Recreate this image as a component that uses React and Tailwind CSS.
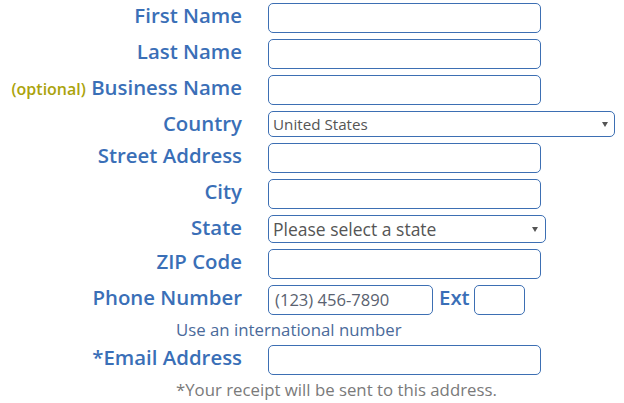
import React from "react";

const Label = ({ children }) => (
  <div className="w-[242px] shrink-0 text-right text-[20.4px] leading-[24px] font-semibold text-[#3a6fb7]">
    {children}
  </div>
);

const TextBox = ({ className = "w-[273px]", placeholder }) => (
  <div
    className={`${className} h-[30px] border border-[#3d6fb3] rounded-[5px] bg-white flex items-center pl-[6px] text-[16.6px] text-[#5a6270]`}
  >
    {placeholder}
  </div>
);

const Arrow = () => (
  <span className="w-0 h-0 border-l-[3px] border-r-[3px] border-t-[5px] border-l-transparent border-r-transparent border-t-[#555]" />
);

const Row = ({ label, children }) => (
  <div className="flex items-start gap-[26px]">
    <Label>{label}</Label>
    {children}
  </div>
);

const App = () => {
  return (
    <div
      className="w-[624px] h-[403px] bg-white pt-[3px] flex flex-col gap-[6px]"
      style={{ fontFamily: "'Open Sans', 'Noto Sans', sans-serif" }}
    >
      <Row label="First Name">
        <TextBox />
      </Row>
      <Row label="Last Name">
        <TextBox />
      </Row>
      <Row
        label={
          <>
            <span className="text-[16px] text-[#aba30c]">(optional)</span> Business Name
          </>
        }
      >
        <TextBox />
      </Row>
      <Row label="Country">
        <div className="w-[347px] h-[26px] border border-[#3d6fb3] rounded-[5px] bg-white flex items-center justify-between pl-[4px] pr-[6px] text-[15.2px] text-[#555]">
          <span>United States</span>
          <Arrow />
        </div>
      </Row>
      <Row label="Street Address">
        <TextBox />
      </Row>
      <Row label="City">
        <TextBox />
      </Row>
      <Row label="State">
        <div className="w-[278px] h-[28px] border border-[#3d6fb3] rounded-[5px] bg-white flex items-center justify-between pl-[4px] pr-[7px] text-[17.5px] text-[#555]">
          <span>Please select a state</span>
          <Arrow />
        </div>
      </Row>
      <Row label="ZIP Code">
        <TextBox />
      </Row>
      <Row label="Phone Number">
        <div className="flex items-start">
          <TextBox className="w-[165px]" placeholder="(123) 456-7890" />
          <span className="ml-[6px] text-[20.4px] leading-[24px] font-semibold text-[#3a6fb7]">Ext</span>
          <div className="ml-[4px] w-[51px] h-[30px] border border-[#3d6fb3] rounded-[5px] bg-white" />
        </div>
      </Row>
      <div className="ml-[176px] h-[18px] text-[16.8px] leading-[18px] text-[#4a6a9a]">
        Use an international number
      </div>
      <Row label="*Email Address">
        <TextBox />
      </Row>
      <div className="ml-[176px] h-[18px] text-[16.8px] leading-[18px] text-[#7a7a7a]">
        *Your receipt will be sent to this address.
      </div>
    </div>
  );
};

export default App;
